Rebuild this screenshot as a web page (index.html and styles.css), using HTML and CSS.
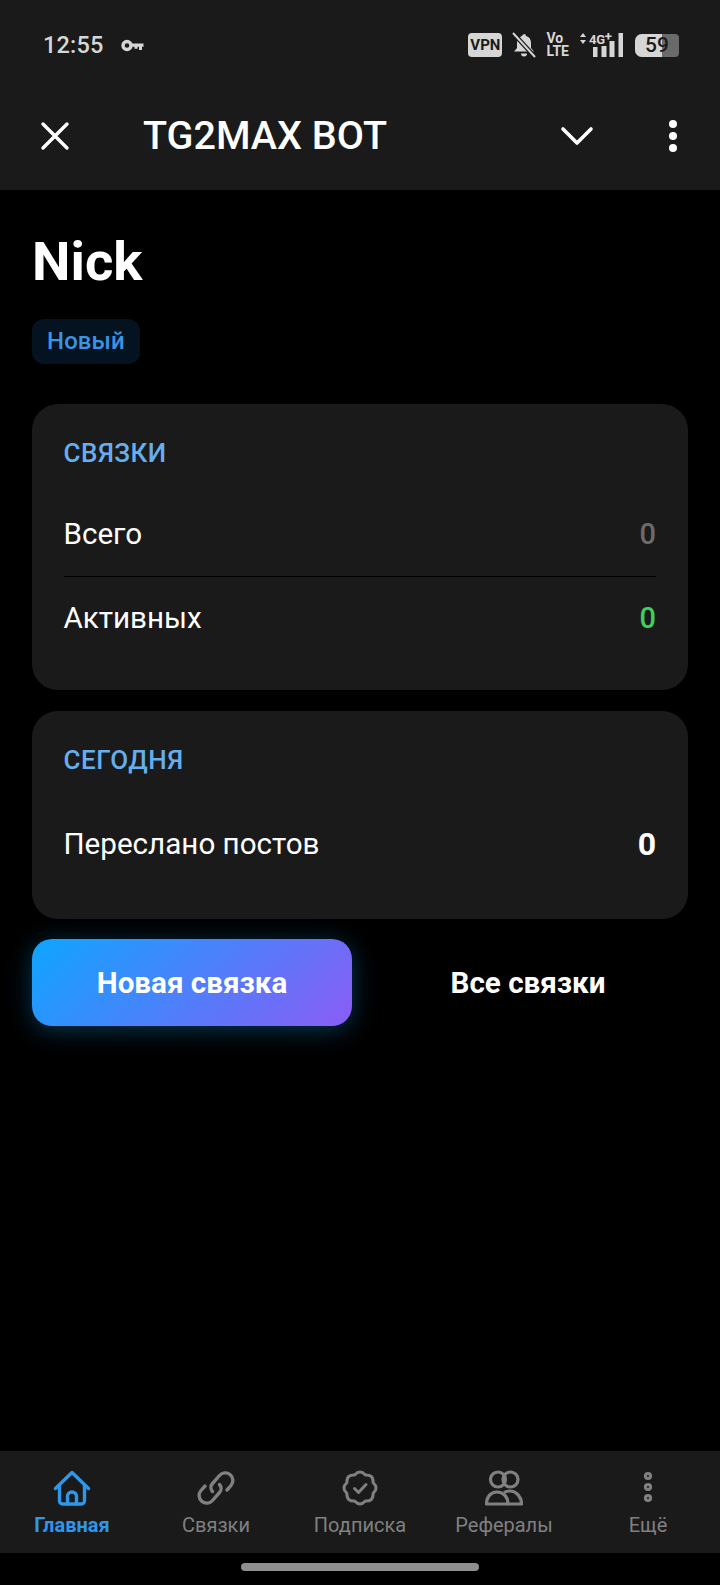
FILE: index.html
```html
<!DOCTYPE html>
<html lang="ru">
<head>
<meta charset="utf-8">
<title>TG2MAX BOT</title>
<link rel="stylesheet" href="styles.css">
</head>
<body>
<div class="screen">
  <header class="top">
    <div class="status">
      <div class="status-left">
        <span class="clock">12:55</span>
        <svg class="key" width="23" height="13" viewBox="0 0 23 13"><circle cx="6" cy="6.500" r="4" fill="none" stroke="#d6d6d6" stroke-width="3.400"/><path d="M10 4.500h12.500v3.200h-1.500v3.300h-3V7.700h-1.500v2h-3v-2H10z" fill="#d6d6d6"/></svg>
      </div>
      <div class="status-right">
        <span class="vpn">VPN</span>
        <svg class="bell" width="24" height="26" viewBox="0 0 24 26"><path d="M12 2a2 2 0 0 1 2 2c3.500 1 5 3.600 5 7v5l3 3.500H2L5 16v-5c0-1.500.3-2.900 1-4z" fill="#d6d6d6"/><path d="M9 21.500h6a3 3 0 0 1-6 0z" fill="#d6d6d6"/><path d="M1 1l22 24" stroke="#1a1a1a" stroke-width="4.500"/><path d="M1 1l22 24" stroke="#d6d6d6" stroke-width="2"/></svg>
        <span class="volte">Vo<br>LTE</span>
        <svg class="signal" width="46" height="34" viewBox="0 -4 46 34"><path d="M1 5l3-4 3 4zM1 8l3 4 3-4z" fill="#d6d6d6"/><text x="10" y="12" class="net">4G<tspan class="net-plus" dy="-3">+</tspan></text><rect x="14" y="15" width="4.500" height="10" fill="#d6d6d6"/><rect x="22.500" y="14" width="5" height="11" fill="#d6d6d6"/><rect x="30.500" y="9" width="5" height="16" fill="#d6d6d6"/><rect x="39.500" y="1" width="4.500" height="24" fill="#d6d6d6"/></svg>
        <div class="battery"><span class="battery-fill"></span><span class="battery-num">59</span></div>
      </div>
    </div>
    <div class="appbar">
      <svg class="close" width="32" height="32" viewBox="0 0 32 32"><path d="M4 4l24 24M28 4L4 28" stroke="#fff" stroke-width="3.400" stroke-linecap="round"/></svg>
      <h1 class="app-title">TG2MAX BOT</h1>
      <svg class="chevron" width="34" height="22" viewBox="0 0 34 22"><path d="M3 4l14 14L31 4" fill="none" stroke="#fff" stroke-width="3.600" stroke-linecap="round" stroke-linejoin="round"/></svg>
      <svg class="dots" width="10" height="34" viewBox="0 0 10 34"><circle cx="5" cy="5" r="4" fill="#fff"/><circle cx="5" cy="17" r="4" fill="#fff"/><circle cx="5" cy="29" r="4" fill="#fff"/></svg>
    </div>
  </header>

  <main class="content">
    <h2 class="name">Nick</h2>
    <span class="badge">Новый</span>

    <section class="card card-links">
      <h3 class="card-title">СВЯЗКИ</h3>
      <div class="row row-line"><span>Всего</span><b class="num muted">0</b></div>
      <div class="row"><span>Активных</span><b class="num green">0</b></div>
    </section>

    <section class="card card-today">
      <h3 class="card-title">СЕГОДНЯ</h3>
      <div class="row"><span>Переслано постов</span><b class="num white">0</b></div>
    </section>

    <div class="actions">
      <button class="btn btn-main">Новая связка</button>
      <button class="btn btn-plain">Все связки</button>
    </div>
  </main>

  <nav class="tabs">
    <a class="tab active">
      <svg width="38" height="36" viewBox="0 0 38 36" fill="none" stroke="currentColor" stroke-width="3.400" stroke-linecap="round" stroke-linejoin="round"><path d="M2.500 18.500L19 2.500l16.500 16"/><path d="M6.500 15v16a3 3 0 0 0 3 3h19a3 3 0 0 0 3-3V15"/><path d="M14.500 34v-7.500a4.500 4.500 0 0 1 9 0V34"/></svg>
      <span>Главная</span>
    </a>
    <a class="tab">
      <svg width="38" height="36" viewBox="0 0 38 36" fill="none" stroke="currentColor" stroke-width="3.400" stroke-linecap="round" stroke-linejoin="round"><path d="M15.500 21.500a6 6 0 0 1 0-8l7-8a7.500 7.500 0 0 1 11.500 10l-4 4.500"/><path d="M22.500 14.500a6 6 0 0 1 0 8l-7 8a7.500 7.500 0 0 1-11.500-10l4-4.500"/></svg>
      <span>Связки</span>
    </a>
    <a class="tab">
      <svg width="38" height="36" viewBox="0 0 38 36" fill="none" stroke="currentColor" stroke-width="3" stroke-linecap="round" stroke-linejoin="round"><path d="M24.400 4.900Q32.500 4.500 32.100 12.600 38 18 32.100 23.400 32.500 31.500 24.400 31.100 19 37 13.600 31.100 5.500 31.500 5.900 23.400 0 18 5.900 12.600 5.500 4.500 13.600 4.900 19 -1 24.400 4.900z"/><path d="M13.500 18.500l4 4 7.500-8"/></svg>
      <span>Подписка</span>
    </a>
    <a class="tab">
      <svg width="38" height="36" viewBox="0 0 38 36" fill="none" stroke="currentColor" stroke-width="3.200" stroke-linejoin="round"><circle cx="13" cy="9.500" r="7.500"/><circle cx="25.500" cy="9.500" r="7.500"/><path d="M1.500 34c0-7 4-12 10.500-12s11 5 11 12z"/><path d="M19 22.500c1.500-.8 3.500-1.500 5.500-1.500 7 0 12 6 12 13H23"/></svg>
      <span>Рефералы</span>
    </a>
    <a class="tab">
      <svg width="38" height="36" viewBox="0 0 38 36" fill="none" stroke="currentColor" stroke-width="3"><circle cx="19" cy="6" r="2.600"/><circle cx="19" cy="17" r="2.600"/><circle cx="19" cy="28" r="2.600"/></svg>
      <span>Ещё</span>
    </a>
  </nav>
  <div class="home-area"><span class="home-bar"></span></div>
</div>
</body>
</html>
```

FILE: styles.css
```css
* { box-sizing: border-box; }
html, body { margin: 0; padding: 0; background: #000; }
body { font-family: Roboto, "Noto Sans", sans-serif; color: #fff; }

.screen { width: 720px; height: 1585px; display: flex; flex-direction: column; overflow: hidden; }

.top { background: #1a1a1a; height: 190px; flex: none; }
.status { display: flex; justify-content: space-between; align-items: center; height: 46px; margin-top: 22px; padding: 0 41px 0 43px; }
.status-left { display: flex; align-items: center; gap: 17px; }
.clock { font-size: 23.500px; font-weight: 500; color: #d6d6d6; letter-spacing: .2px; }
.status-right { display: flex; align-items: center; gap: 10px; color: #d6d6d6; }
.vpn { background: #d6d6d6; color: #1a1a1a; font-size: 15px; font-weight: 700; border-radius: 4px; padding: 3px 2px; line-height: 18px; }
.volte { font-size: 14px; font-weight: 700; line-height: 13px; }
.net { font: 700 13px Roboto, sans-serif; fill: #d6d6d6; letter-spacing: -.3px; }
.battery { position: relative; width: 44px; height: 23px; border-radius: 7px 4px 4px 7px; background: #6a6a6a; overflow: hidden; text-align: center; }
.battery-fill { position: absolute; left: 0; top: 0; bottom: 0; width: 27px; background: #d6d6d6; }
.battery-num { position: relative; font-size: 21px; font-weight: 500; line-height: 23px; color: #1a1a1a; }

.appbar { display: flex; align-items: center; height: 60px; margin-top: 38px; padding: 0 42px 0 39px; }
.app-title { margin: 0 0 0 72px; font-size: 39.500px; font-weight: 500; flex: 1; line-height: 60px; }
.chevron { margin-right: 74px; }

.content { flex: 1; padding: 0 32px; }
.name { margin: 35px 0 0; font-size: 54.500px; font-weight: 700; line-height: 72px; }
.badge { display: inline-block; margin-top: 22px; padding: 0 15px; height: 45px; line-height: 45px; background: #04131f; color: #3a94e4; font-size: 24px; font-weight: 500; border-radius: 12px; letter-spacing: .1px; }

.card { background: #1a1a1a; border-radius: 26px; padding: 33px 32px 33px 31.500px; }
.card-links { margin-top: 40px; height: 286px; }
.card-today { margin-top: 21px; height: 208px; }
.card-title { margin: 0 0 24px; font-size: 26px; line-height: 32px; font-weight: 500; color: #66aeee; letter-spacing: .5px; }
.row { display: flex; justify-content: space-between; align-items: center; height: 84px; font-size: 29.600px; padding-bottom: 2px; }
.card-today .row { padding: 3px 0 0; }
.row-line { border-bottom: 1px solid #000; }
.num { font-weight: 500; font-size: 29px; }
.muted { color: #6b6b6b; }
.green { color: #3ecf5c; }
.white { color: #fff; font-size: 32px; font-weight: 700; }

.actions { display: flex; margin-top: 20px; gap: 16px; }
.btn { flex: 1; height: 87px; border: 0; border-radius: 20px; font-family: inherit; font-size: 29.600px; font-weight: 700; color: #fff; background: none; }
.btn-main { background: linear-gradient(135deg, #0ea5ff 0%, #8b5cf6 100%); box-shadow: 0 4px 24px rgba(14, 165, 255, .32); }

.tabs { display: flex; height: 102px; background: #1a1a1a; flex: none; }
.tab { width: 144px; display: flex; flex-direction: column; align-items: center; padding-top: 19px; color: #808080; font-size: 20px; }
.tab span { line-height: 26px; margin-top: 6px; }
.tab.active { color: #2f96ea; font-weight: 700; }

.home-area { height: 32px; display: flex; justify-content: center; padding-top: 10px; flex: none; }
.home-bar { width: 238px; height: 8px; border-radius: 4px; background: #8f8f8f; }
```
